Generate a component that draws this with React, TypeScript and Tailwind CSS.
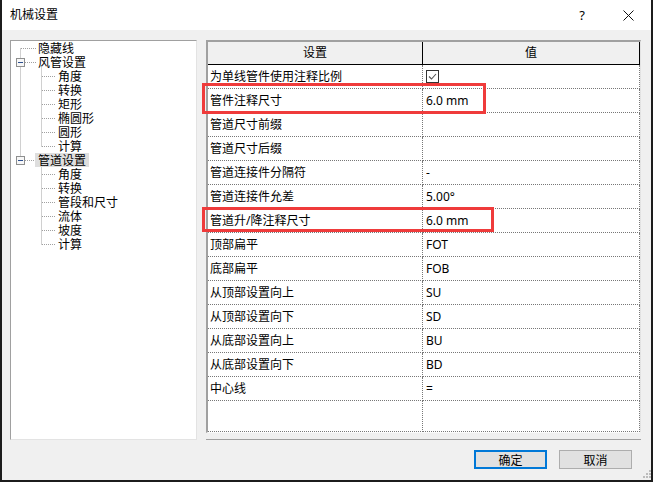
import React from 'react'

type TreeItem = { label: string; level: 0 | 1; box?: boolean; selected?: boolean }

const TREE: TreeItem[] = [
  { label: '隐藏线', level: 0 },
  { label: '风管设置', level: 0, box: true },
  { label: '角度', level: 1 },
  { label: '转换', level: 1 },
  { label: '矩形', level: 1 },
  { label: '椭圆形', level: 1 },
  { label: '圆形', level: 1 },
  { label: '计算', level: 1 },
  { label: '管道设置', level: 0, box: true, selected: true },
  { label: '角度', level: 1 },
  { label: '转换', level: 1 },
  { label: '管段和尺寸', level: 1 },
  { label: '流体', level: 1 },
  { label: '坡度', level: 1 },
  { label: '计算', level: 1 },
]

const ROWS: { name: string; value: string | null }[] = [
  { name: '为单线管件使用注释比例', value: null },
  { name: '管件注释尺寸', value: '6.0 mm' },
  { name: '管道尺寸前缀', value: '' },
  { name: '管道尺寸后缀', value: '' },
  { name: '管道连接件分隔符', value: '-' },
  { name: '管道连接件允差', value: '5.00°' },
  { name: '管道升/降注释尺寸', value: '6.0 mm' },
  { name: '顶部扁平', value: 'FOT' },
  { name: '底部扁平', value: 'FOB' },
  { name: '从顶部设置向上', value: 'SU' },
  { name: '从顶部设置向下', value: 'SD' },
  { name: '从底部设置向上', value: 'BU' },
  { name: '从底部设置向下', value: 'BD' },
  { name: '中心线', value: '=' },
]

const rowY = (i: number) => 7.5 + i * 14

function TreeLines() {
  const dash = { stroke: '#a0a0a0', strokeWidth: 1, strokeDasharray: '1 1' }
  const boxes = [1, 8]
  const groups = [
    { parent: 1, first: 2, last: 7 },
    { parent: 8, first: 9, last: 14 },
  ]
  return (
    <svg className="absolute inset-0 pointer-events-none" width="185" height="398">
      <line x1="9.5" y1={rowY(0)} x2="9.5" y2={rowY(8) - 4} {...dash} />
      <line x1="10" y1={rowY(0)} x2="25" y2={rowY(0)} {...dash} />
      {boxes.map((r) => (
        <line key={'h' + r} x1="14" y1={rowY(r)} x2="25" y2={rowY(r)} {...dash} />
      ))}
      {groups.map((g) => (
        <g key={g.parent}>
          <line x1="30.5" y1={rowY(g.parent) + 5} x2="30.5" y2={rowY(g.last)} {...dash} />
          {Array.from({ length: g.last - g.first + 1 }, (_, k) => (
            <line key={k} x1="31" y1={rowY(g.first + k)} x2="45" y2={rowY(g.first + k)} {...dash} />
          ))}
        </g>
      ))}
      {boxes.map((r) => (
        <g key={'b' + r}>
          <rect x="5.5" y={rowY(r) - 4} width="8" height="8" fill="#f7f7f7" stroke="#8e8f8f" />
          <line x1="7" y1={rowY(r)} x2="12" y2={rowY(r)} stroke="#2c4f8f" strokeWidth="1" />
        </g>
      ))}
    </svg>
  )
}

function Checkbox() {
  return (
    <span className="flex h-[13px] w-[13px] items-center justify-center border border-[#333] bg-white">
      <svg width="11" height="11" viewBox="0 0 11 11">
        <polyline points="2,5.5 4.5,8 9,3" fill="none" stroke="#555" strokeWidth="1.1" />
      </svg>
    </span>
  )
}

export default function App() {
  return (
    <div className="relative flex h-[482px] w-[653px] flex-col bg-[#1c1c1c] pb-[2px] pl-[2px] pr-[2px] font-['Noto_Sans','Noto_Sans_CJK_SC',sans-serif] text-[12px] text-black">
      {/* title bar */}
      <div className="flex h-[30px] shrink-0 items-center bg-white pl-[8px]">
        <span className="leading-none">机械设置</span>
        <span className="ml-auto mr-[38px] text-[13px] leading-none">?</span>
        <svg className="mr-[17px]" width="11" height="11" viewBox="0 0 11 11">
          <path d="M0.5 0.5 L10.5 10.5 M10.5 0.5 L0.5 10.5" stroke="#111" strokeWidth="1" />
        </svg>
      </div>

      {/* body */}
      <div className="flex flex-1 flex-col bg-[#f0f0f0] pl-[8px] pt-[10px]">
        <div className="flex h-[400px] gap-[9px]">
          {/* tree */}
          <div className="relative h-[400px] w-[187px] border border-b-[#e3e3e3] border-l-[#a0a0a0] border-r-[#e3e3e3] border-t-[#a0a0a0] bg-white font-['Noto_Sans_CJK_SC',sans-serif]">
            <TreeLines />
            <div className="relative flex flex-col">
              {TREE.map((t, i) => (
                <div
                  key={i}
                  className={`flex h-[14px] items-center leading-[14px] ${t.level === 0 ? 'pl-[24px]' : 'pl-[44px]'}`}
                >
                  <span className={`h-[14px] px-[3px] leading-[14px] ${t.selected ? 'bg-[#dedede]' : ''}`}>
                    {t.label}
                  </span>
                </div>
              ))}
            </div>
          </div>

          {/* grid */}
          <div className="flex w-[435px] flex-col">
            <div className="flex flex-col border-b border-l-2 border-r border-t-2 border-b-[#fbfbfb] border-l-[#a0a0a0] border-r-[#e3e3e3] border-t-[#a0a0a0] bg-white">
              <div className="flex h-[23px] border-b border-black bg-[#f0f0f0]">
                <div className="flex w-[215px] items-center justify-center border-r border-black">设置</div>
                <div className="flex w-[217px] items-center justify-center border-r border-black">值</div>
              </div>
              {ROWS.map((r, i) => (
                <div key={i} className="flex h-[24px]">
                  <div className="flex w-[215px] items-center border-b border-r border-dotted border-[#777] pl-[2px]">
                    {r.name}
                  </div>
                  <div className="flex w-[217px] items-center border-b border-r border-dotted border-[#777] pl-[3px]">
                    {r.value === null ? <Checkbox /> : r.value}
                  </div>
                </div>
              ))}
              <div className="flex h-[31px]">
                <div className="w-[215px] border-b border-r border-dotted border-[#777]" />
                <div className="w-[217px] border-b border-r border-dotted border-[#777]" />
              </div>
            </div>
            <div className="h-[7px] border-b border-[#a0a0a0]" />
          </div>
        </div>

        {/* buttons */}
        <div className="flex h-[39px] items-start justify-end pt-[10px]">
          <button className="flex h-[19px] w-[73px] items-center justify-center border-2 border-[#0078d7] bg-[#e1e1e1] font-['Noto_Sans_CJK_SC',sans-serif] leading-none">
            确定
          </button>
          <button className="ml-[12px] flex h-[19px] w-[73px] items-center justify-center border border-[#adadad] bg-[#e1e1e1] font-['Noto_Sans_CJK_SC',sans-serif] leading-none">
            取消
          </button>
          <svg className="mb-[1px] ml-[10px] self-end" width="9" height="9" viewBox="0 0 9 9">
            <rect x="7" y="1" width="2" height="2" fill="#bcbcbc" />
            <rect x="4" y="4" width="2" height="2" fill="#bcbcbc" />
            <rect x="7" y="4" width="2" height="2" fill="#bcbcbc" />
            <rect x="1" y="7" width="2" height="2" fill="#bcbcbc" />
            <rect x="4" y="7" width="2" height="2" fill="#bcbcbc" />
            <rect x="7" y="7" width="2" height="2" fill="#bcbcbc" />
          </svg>
        </div>
      </div>

      {/* red annotation boxes */}
      <div className="pointer-events-none absolute left-[202px] top-[83px] h-[31px] w-[284px] border-[3px] border-[#ef3b3b]" />
      <div className="pointer-events-none absolute left-[202px] top-[207px] h-[25px] w-[292px] border-[3px] border-[#ef3b3b]" />
    </div>
  )
}
